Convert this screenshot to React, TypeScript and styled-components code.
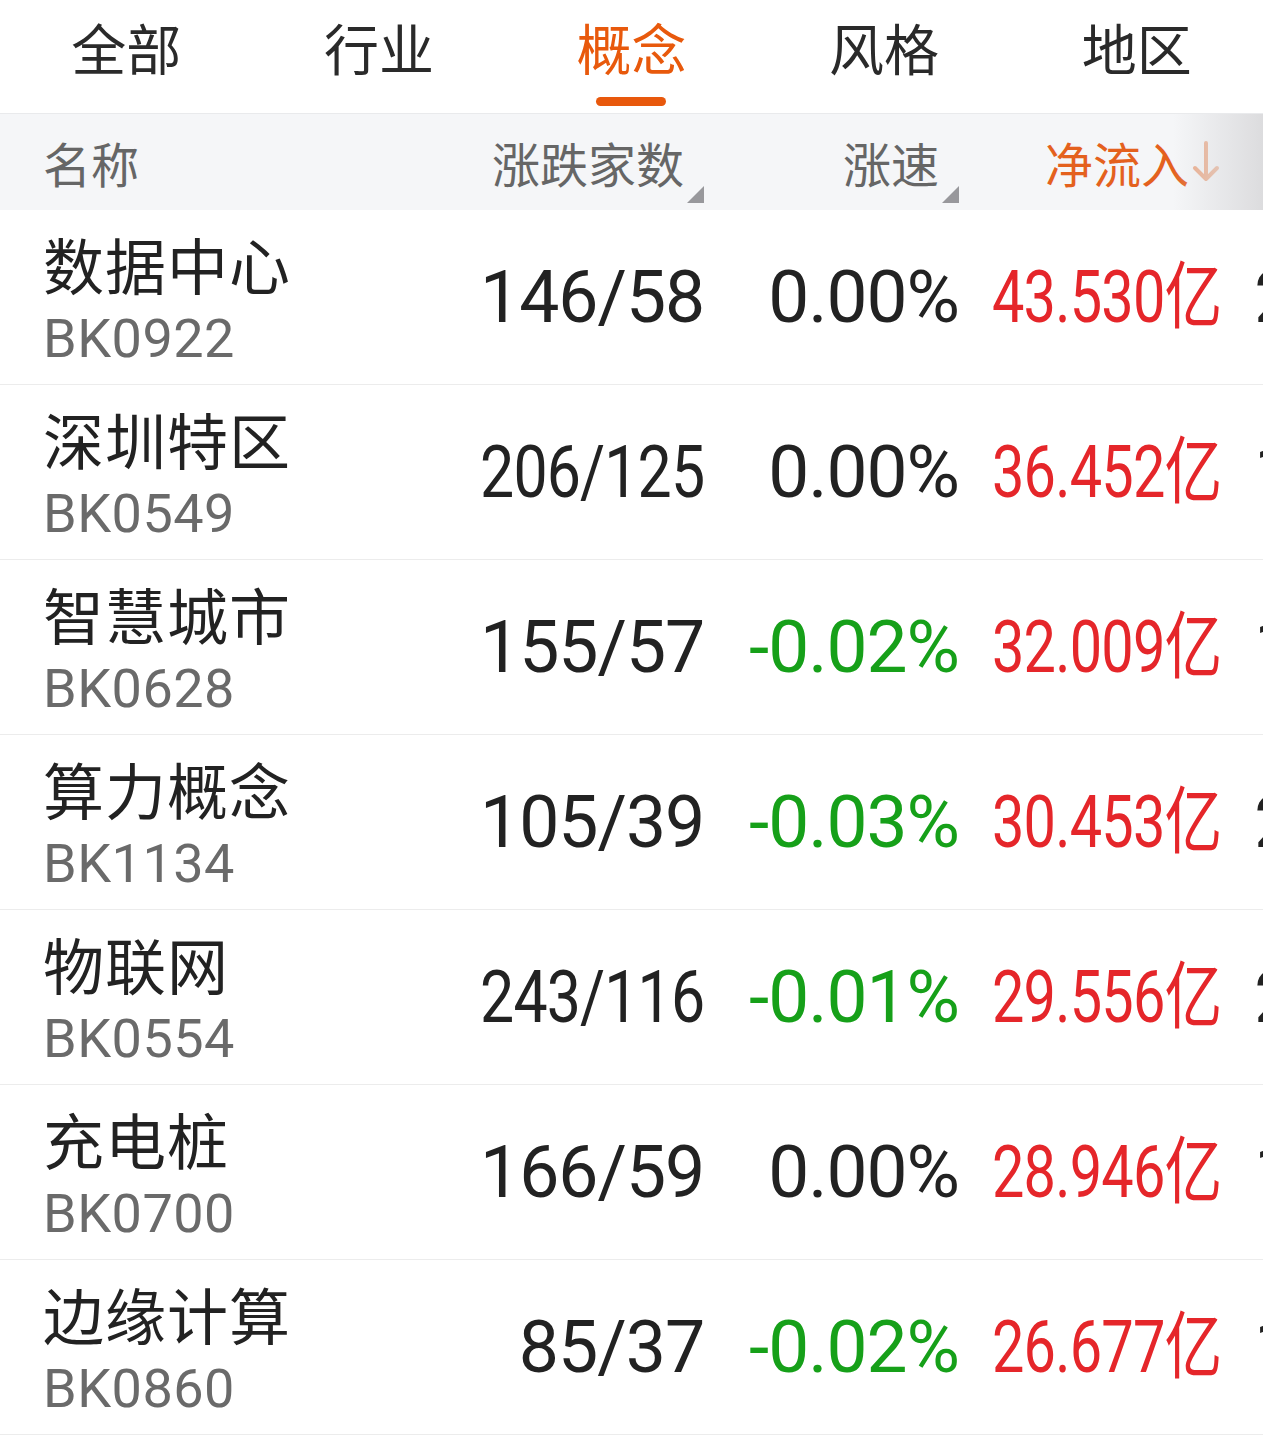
import React from 'react';
import styled, { createGlobalStyle } from 'styled-components';

const GlobalStyle = createGlobalStyle`
  html, body {
    margin: 0;
    padding: 0;
    background: #ffffff;
    overflow: hidden;
  }
  body {
    font-family: Roboto, "Noto Sans CJK SC", sans-serif;
    width: 1263px;
  }
`;

interface RowData {
  name: string;
  code: string;
  count: string;
  speed: string;
  inflow: string;
  extra: string;
}

const rows: RowData[] = [
  { name: '数据中心', code: 'BK0922', count: '146/58', speed: '0.00%', inflow: '43.530亿', extra: '2.15%' },
  { name: '深圳特区', code: 'BK0549', count: '206/125', speed: '0.00%', inflow: '36.452亿', extra: '1.08%' },
  { name: '智慧城市', code: 'BK0628', count: '155/57', speed: '-0.02%', inflow: '32.009亿', extra: '1.62%' },
  { name: '算力概念', code: 'BK1134', count: '105/39', speed: '-0.03%', inflow: '30.453亿', extra: '2.40%' },
  { name: '物联网', code: 'BK0554', count: '243/116', speed: '-0.01%', inflow: '29.556亿', extra: '2.03%' },
  { name: '充电桩', code: 'BK0700', count: '166/59', speed: '0.00%', inflow: '28.946亿', extra: '1.77%' },
  { name: '边缘计算', code: 'BK0860', count: '85/37', speed: '-0.02%', inflow: '26.677亿', extra: '1.91%' },
];

const tabs = ['全部', '行业', '概念', '风格', '地区'];

// the app shrinks long counts so they fit the column
const countScale = (s: string) => {
  const natural = (s.length - 1) * 40 + 29;
  return Math.min(0.98, 224 / natural);
};

const Page = styled.div`
  width: 1263px;
  overflow: hidden;
`;

const TabBar = styled.div`
  display: grid;
  grid-template-columns: repeat(5, 1fr);
  height: 114px;
  border-bottom: 1px solid #e9eaec;
  box-sizing: border-box;
`;

const Tab = styled.div<{ $active?: boolean }>`
  display: flex;
  flex-direction: column;
  align-items: center;
  font-family: "Noto Sans CJK SC", sans-serif;
  font-size: 55px;
  line-height: 56px;
  padding-top: 18px;
  color: ${p => (p.$active ? '#e8590c' : '#2a2a2a')};
`;

const TabLine = styled.div<{ $show?: boolean }>`
  margin-top: 23px;
  width: 70px;
  height: 9px;
  border-radius: 5px;
  background: ${p => (p.$show ? '#e8580c' : 'transparent')};
`;

const Header = styled.div`
  position: relative;
  display: grid;
  grid-template-columns: 400px 261px 255px 262px;
  padding-left: 43px;
  height: 96px;
  align-items: center;
  background: #f5f6f8;
  font-family: "Noto Sans CJK SC", sans-serif;
  font-size: 48px;
  color: #666666;

  &::after {
    content: '';
    position: absolute;
    top: 0;
    right: 0;
    bottom: 0;
    width: 90px;
    background: linear-gradient(to right, rgba(225, 225, 227, 0), #dcdcde);
  }
`;

const HeadCell = styled.div<{ $orange?: boolean }>`
  display: flex;
  align-items: center;
  justify-content: flex-end;
  color: ${p => (p.$orange ? '#e4611e' : '#666666')};
  line-height: 50px;
`;

const HeadName = styled.div`
  line-height: 50px;
`;

const SortMark = styled.span`
  display: inline-block;
  width: 17px;
  height: 17px;
  margin-left: 3px;
  align-self: flex-end;
  margin-bottom: -16px;
  background: #98989c;
  clip-path: polygon(100% 0, 100% 100%, 0 100%);
`;

const ArrowIcon = styled.svg`
  width: 30px;
  height: 46px;
  margin-left: 2px;
`;

const Row = styled.div`
  display: grid;
  grid-template-columns: 400px 261px 255px 262px 33px 200px;
  padding-left: 43px;
  height: 175px;
  box-sizing: border-box;
  border-bottom: 1px solid #ececec;
  align-items: center;
  white-space: nowrap;
`;

const NameBlock = styled.div`
  display: flex;
  flex-direction: column;
  padding-top: 9px;
`;

const Name = styled.div`
  font-family: "Noto Sans CJK SC", sans-serif;
  font-size: 61px;
  line-height: 74px;
  color: #222222;
  letter-spacing: 1px;
`;

const Code = styled.div`
  font-family: Roboto, sans-serif;
  font-size: 54px;
  line-height: 76px;
  color: #6a6a6a;
  letter-spacing: 0.5px;
`;

const Num = styled.div<{ $color: string }>`
  display: flex;
  justify-content: flex-end;
  font-family: Roboto, "Noto Sans CJK SC", sans-serif;
  font-size: 73px;
  line-height: 80px;
  color: ${p => p.$color};
  letter-spacing: -1px;
`;

const Squeeze = styled.span<{ $scale: number }>`
  display: inline-block;
  transform: scaleX(${p => p.$scale});
  transform-origin: right center;
`;

const Extra = styled.div`
  grid-column: 6;
  font-family: Roboto, sans-serif;
  font-size: 73px;
  line-height: 80px;
  color: #222222;
`;

const speedColor = (v: string) => (v.startsWith('-') ? '#16a019' : '#222222');

const App: React.FC = () => {
  return (
    <Page>
      <GlobalStyle />
      <TabBar>
        {tabs.map(t => (
          <Tab key={t} $active={t === '概念'}>
            {t}
            <TabLine $show={t === '概念'} />
          </Tab>
        ))}
      </TabBar>
      <Header>
        <HeadName>名称</HeadName>
        <HeadCell>
          涨跌家数
          <SortMark />
        </HeadCell>
        <HeadCell>
          涨速
          <SortMark />
        </HeadCell>
        <HeadCell $orange>
          净流入
          <ArrowIcon viewBox="0 0 30 46">
            <path
              d="M15 4 V40 M4 29 L15 40 L26 29"
              fill="none"
              stroke="#eca885"
              strokeWidth="4"
              strokeLinecap="round"
              strokeLinejoin="round"
            />
          </ArrowIcon>
        </HeadCell>
      </Header>
      {rows.map(r => (
        <Row key={r.code}>
          <NameBlock>
            <Name>{r.name}</Name>
            <Code>{r.code}</Code>
          </NameBlock>
          <Num $color="#222222">
            <Squeeze $scale={countScale(r.count)}>{r.count}</Squeeze>
          </Num>
          <Num $color={speedColor(r.speed)}>{r.speed}</Num>
          <Num $color="#e5262a">
            <Squeeze $scale={0.79}>{r.inflow}</Squeeze>
          </Num>
          <Extra>{r.extra}</Extra>
        </Row>
      ))}
    </Page>
  );
};

export default App;
